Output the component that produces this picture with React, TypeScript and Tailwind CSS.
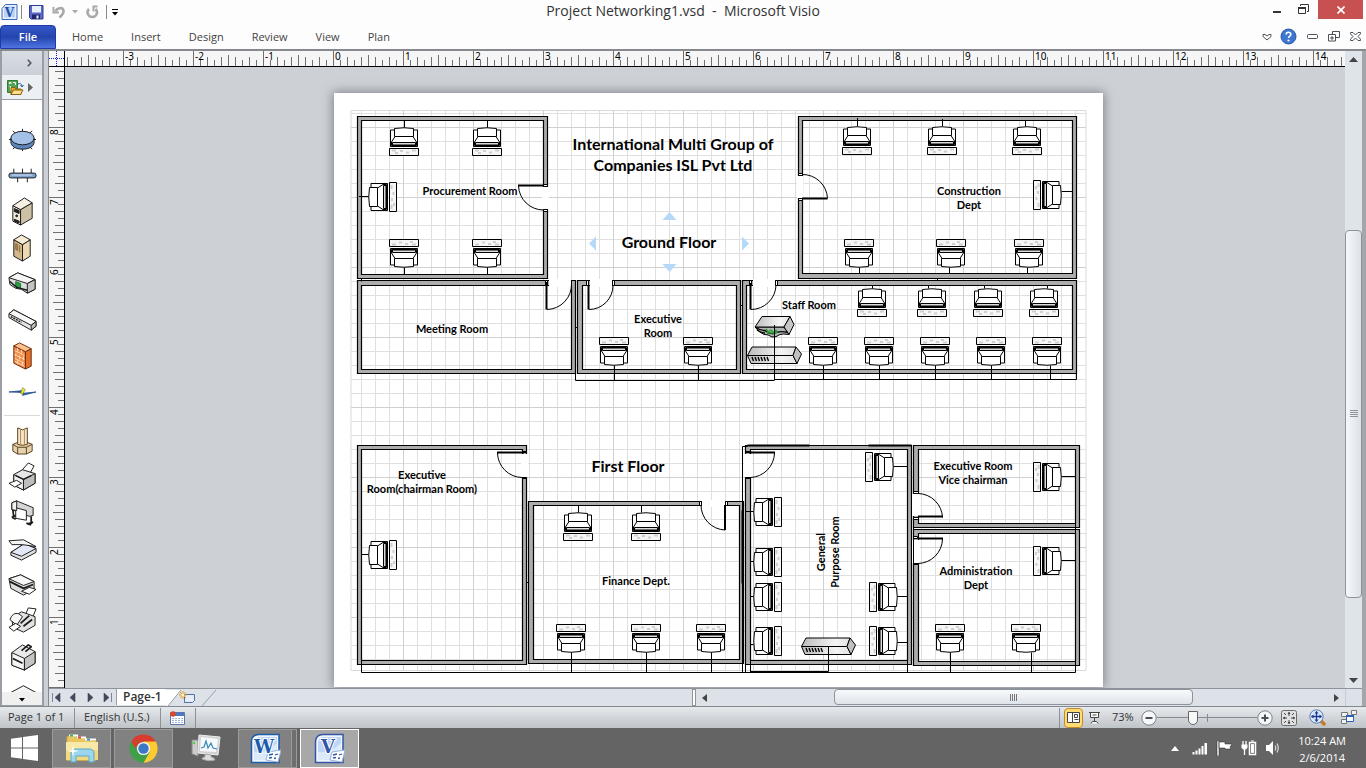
import React from "react";

const UI = "font-['Open_Sans','Noto_Sans',sans-serif]";

/* ---------- Title bar icons ---------- */

function VisioSmall() {
  return (
    <svg width="17" height="18" viewBox="0 0 17 18" aria-hidden="true">
      <path d="M1 5.5 4.5 1.5H16v15H1z" fill="#e6effc" stroke="#3c68b8" />
      <path d="M3 6 5.5 3.5H14v11H3z" fill="#bcd3f5" />
      <text x="8.5" y="13.5" fontSize="12" fontWeight="700" textAnchor="middle" fill="#1f4fa8" fontFamily="DejaVu Serif, serif">V</text>
    </svg>
  );
}

function SaveIcon() {
  return (
    <svg width="15" height="15" viewBox="0 0 15 15" aria-hidden="true">
      <path d="M.5.5h13.500v13.500H2L.5 12.500z" fill="#5a66c8" stroke="#343c96" />
      <rect x="3" y="1" width="9" height="6.500" fill="#e8f0fc" />
      <rect x="3" y="9.500" width="8" height="4.500" fill="#20246b" />
      <rect x="7.500" y="10.500" width="2" height="3" fill="#f3f6fd" />
    </svg>
  );
}

function UndoIcon() {
  return (
    <svg width="14" height="14" viewBox="0 0 14 14" fill="none" stroke="#a9a9a9" aria-hidden="true">
      <path d="M3.500 6.500C5 3 10.500 1.500 11.500 5.500c.6 3-2 5-4 7" strokeWidth="2.600" />
      <path d="M1.500 2v5.500H7" strokeWidth="2" />
    </svg>
  );
}

function RedoIcon() {
  return (
    <svg width="13" height="14" viewBox="0 0 13 14" fill="none" stroke="#a9a9a9" aria-hidden="true">
      <path d="M3 4C0 7 2 12 6.300 12S12.500 7 9.500 4" strokeWidth="2.600" />
      <path d="M11.500 1.500H7.500v5" strokeWidth="2" />
    </svg>
  );
}

function TitleBar() {
  return (
    <header className="relative flex h-6 shrink-0 items-center bg-[#fdfdfd]">
      <div className="flex items-center pl-px">
        <VisioSmall />
        <span className="ml-[3px] h-3.5 w-px bg-[#8a8a8a]" />
        <button aria-label="Save" className="ml-[7px]"><SaveIcon /></button>
        <button aria-label="Undo" className="ml-2"><UndoIcon /></button>
        <svg width="6" height="4" className="ml-1.5" aria-hidden="true"><path d="M0 0h6L3 3.500z" fill="#a9a9a9" /></svg>
        <button aria-label="Redo" className="ml-2"><RedoIcon /></button>
        <span className="ml-[7px] h-3.5 w-px bg-[#8a8a8a]" />
        <button aria-label="Customize toolbar" className="ml-1">
          <svg width="8" height="8" aria-hidden="true"><path d="M1 1.500h6" stroke="#000" /><path d="M1 4h6L4 7.500z" /></svg>
        </button>
      </div>
      <h1 className="pointer-events-none absolute inset-x-0 whitespace-pre pb-0.5 text-center text-sm text-[#333]">Project Networking1.vsd  -  Microsoft Visio</h1>
      <div className="ml-auto flex h-full items-start">
        <button aria-label="Minimize" className="mt-2 w-6">
          <svg width="8" height="6" className="mx-auto" aria-hidden="true"><path d="M0 4h8" stroke="#333" strokeWidth="2" /></svg>
        </button>
        <button aria-label="Restore" className="mt-1 flex w-7 justify-center">
          <svg width="11" height="11" viewBox="0 0 11 11" fill="none" stroke="#333" aria-hidden="true">
            <path d="M2.500 2V.500h8v7H9" /><path d="M.500 3.500h7v6h-7z" /><path d="M0 4h8" strokeWidth="2" />
          </svg>
        </button>
        <button aria-label="Close" className="ml-px mr-[3px] flex h-[19px] w-[45px] items-center justify-center bg-[#c75050]">
          <svg width="8" height="8" viewBox="0 0 8 8" aria-hidden="true"><path d="m.5.5 7 7m0-7-7 7" stroke="#fff" strokeWidth="1.700" /></svg>
        </button>
      </div>
    </header>
  );
}

const ribbonTabs = ["Home", "Insert", "Design", "Review", "View", "Plan"];

function Ribbon() {
  return (
    <nav className="flex h-[27px] shrink-0 items-stretch border-b-2 border-[#85898e] bg-[#fdfdfd] text-[11px] text-[#444]">
      <button className="mt-px h-6 w-14 rounded-t-sm border border-[#1d3ba5] bg-gradient-to-b from-[#3558c8] via-[#2544ac] to-[#4f74e2] font-semibold text-white">File</button>
      <div className="ml-0.5 flex pt-0.5">
        {ribbonTabs.map((t) => (
          <button key={t} className="px-3.5">{t}</button>
        ))}
      </div>
      <div className="ml-auto flex items-center gap-3 pr-[5px]">
        <button aria-label="Expand ribbon">
          <svg width="10" height="8" viewBox="0 0 10 8" fill="#fff" stroke="#4b5056" aria-hidden="true"><path d="M1 1.500h2L5 3l2-1.500h2V3.500L5 7 1 3.500z" /></svg>
        </button>
        <button aria-label="Help" className="-ml-1">
          <svg width="17" height="17" viewBox="0 0 17 17" aria-hidden="true">
            <circle cx="8.500" cy="8.500" r="7.500" fill="#3f77d0" stroke="#2a56a8" />
            <path d="M6.200 6.500c0-3 4.800-3 4.600 0-.1 1.600-2.200 1.700-2.200 3.500" fill="none" stroke="#fff" strokeWidth="1.700" />
            <circle cx="8.500" cy="12.500" r="1.100" fill="#fff" />
          </svg>
        </button>
        <button aria-label="Minimize window" className="-ml-0.5">
          <svg width="11" height="6" aria-hidden="true"><rect x=".5" y=".5" width="10" height="4" rx="1" fill="#fff" stroke="#4b5056" /></svg>
        </button>
        <button aria-label="Restore window" className="-ml-0.5">
          <svg width="12" height="11" viewBox="0 0 12 11" fill="#fff" stroke="#4b5056" aria-hidden="true"><path d="M4.500.500h7v6h-7z" /><path d="M.500 3.500h7v6.500h-7z" /><path d="M3 6h2v2H3z" /></svg>
        </button>
        <button aria-label="Close window" className="-ml-0.5">
          <svg width="11" height="9" viewBox="0 0 11 9" fill="#fff" stroke="#4b5056" aria-hidden="true"><path d="M.500.500H3L5.500 3 8 .500h2.500v1.300L8 4.500l2.500 2.700v1.300H8L5.500 6 3 8.500H.500V7.200L3 4.500.500 1.800z" /></svg>
        </button>
      </div>
    </nav>
  );
}

/* ---------- Stencil panel ---------- */

const k = { stroke: "#1c1c1c", strokeLinejoin: "round" as const };

const upperShapes: [string, React.ReactNode][] = [
  ["Ring network", <g {...k}><path d="M1 15h28M15 4v23M5 6l20 19M25 6 5 25" /><path d="M3 13.500v4C3 22 8 25 15 25s12-3 12-7.500v-4z" fill="#5d86be" /><ellipse cx="15" cy="13.500" rx="12" ry="7" fill="#a3c1e8" /></g>],
  ["Ethernet", <g {...k}><path d="M6 8v5M15 8v5M24 8v5M10 16v6M20 16v6" /><rect x="1" y="12.500" width="28" height="5" rx="2" fill="#7fa2cf" /><path d="M4 14.500h21" stroke="#d5e3f6" /></g>],
  ["Server", <g {...k}><path d="m5 9 8 4v16l-8-4z" fill="#f2ebd8" /><path d="m13 13 12-7v16l-12 7z" fill="#cdc2a6" /><path d="M5 9 17 1l8 5-12 7z" fill="#f6f0e2" /><path d="m6.500 12 5 2v3l-5-2zM6.500 23l5 2v2l-5-2z" fill="#222" /><circle cx="9" cy="19.500" r="1" fill="#222" /></g>],
  ["Mainframe", <g {...k}><path d="m6 7 9 5v17l-9-5z" fill="#d3b88c" /><path d="m15 12 8-5v17l-8 5z" fill="#eddab2" /><path d="m6 7 8-5 9 5-8 5z" fill="#f6ecd4" /><path d="m8 11 2 1v6l-2-1zM12 13v7" stroke="#8a6a3a" fill="#a98552" /></g>],
  ["Router", <g {...k}><path d="m1 9 9-5 18 7v10l-8 4-6-4-6-1-6-4z" fill="#dcdcdc" /><path d="m1 9 9-5 18 7-8 4z" fill="#f6f6f6" /><path d="m20 15 8-4v10l-8 4z" fill="#c4c4c4" /><path d="m8 13 5 2v5l-5-2z" fill="#27a043" stroke="#17752d" /><path d="m2 13 7 6 11 3" fill="none" strokeWidth="1.500" /></g>],
  ["Switch", <g {...k}><path d="m1 9 5-4 23 12v5l-5 4L1 13z" fill="#e4e4e4" /><path d="m1 9 5-4 23 12-5 4z" fill="#f7f7f7" /><path d="m24 21 5-4v5l-5 4z" fill="#bbb" /><path d="m3 12 11 6" strokeDasharray="2 1" strokeWidth="1.500" /></g>],
  ["Firewall", <g stroke="#6b2d0c"><path d="m18 11 6-3v18l-6 3z" fill="#e0702c" /><path d="m6 5 12 6v18L6 23z" fill="#f58a45" /><path d="m6 5 6-3 12 6-6 3z" fill="#ffc08c" /><path d="m7 10 10 5M7 14l10 5M7 18l10 5M7 21l10 5M10 7v4m4-2v4m-6 0v3m4-1v4m4-3v4m-6 0v4m5-2v3" stroke="#ffdcc0" /></g>],
  ["Comm link", <g><path d="M1 15.500 16 14l-2 3 15-1.500L15 19l1-3z" fill="#2c5fa8" stroke="#1d4686" strokeWidth=".8" /><path d="m15 11 3 2-3 5-2-1z" fill="#e8e337" stroke="#5d6a1d" strokeWidth=".5" /></g>],
];

const lowerShapes: [string, React.ReactNode][] = [
  ["Connector", <g stroke="#5a3f1c" strokeLinejoin="round"><path d="M5 19v7l5 3h9l6-3v-7l-5-2H10z" fill="#e6d2ae" /><path d="m5 19 5 3h9l6-3M10 22v7M19 22v7" fill="none" /><path d="m10 2 5 2 5-2v17l-5 1-5-1z" fill="#f6e5c8" /><path d="M13 4v16M17 4v16" stroke="#a98a5c" /></g>],
  ["Printer", <g {...k}><path d="m14 9 7-8 6 3-5 9z" fill="#fff" /><path d="m6 13 9-5 13 4v10l-12 7-10-5z" fill="#e6e6e6" /><path d="m6 13 10 5v11l-10-5z" fill="#f1f1f1" /><path d="m16 18 12-6v10l-12 7z" fill="#bdbdbd" /><path d="m1 22 8-3 5 3-7 4z" fill="#fff" /><path d="m8 14 8 4 8-4" strokeWidth="1.500" fill="none" /></g>],
  ["Plotter", <g {...k}><path d="m4 5 5-2 17 7v8l-4 1-18-7z" fill="#d6d6d6" /><path d="m8 10 11 3v10L8 21z" fill="#fff" /><path d="m5 12 1 8m-2 0 4-2m16 1v8m-4 0 6-2M4 20l4 2m11 4 5 2" strokeWidth="1.800" /><path d="m4 5 5-2v10l-5-1z" fill="#f2f2f2" /></g>],
  ["Scanner", <g {...k}><path d="m3 19 14-9 12 5v4l-15 8-11-5z" fill="#e0e0e0" /><path d="m3 19 14-9 12 5-15 8z" fill="#e3e9f6" /><path d="m1 7 15-1 13 7-14-2-11 0z" fill="#f4f4f4" /></g>],
  ["Inkjet printer", <g {...k}><path d="m1 9 12-4 14 7v8l-11 6-13-7z" fill="#dedede" /><path d="m1 9 12-4 14 7-11 4z" fill="#f7f7f7" /><path d="m2 12 14 7 10-4" fill="none" strokeWidth="1.800" /><path d="m14 22 8-4 7 2-7 5z" fill="#fff" /></g>],
  ["Fax", <g {...k}><path d="m18 9 3-7 8 1-4 10z" fill="#fff" /><path d="m4 12 10-6 14 5v9l-12 7-11-5z" fill="#e2e2e2" /><path d="M2 14q3-8 9-6l4 3-6 9z" fill="#f7f7f7" /><path d="m13 18 9-8m-6 11 9-7" strokeWidth="1.800" /><path d="m1 22 7-4 5 3-7 5z" fill="#fff" /></g>],
  ["Copier", <g {...k}><path d="m4 11 11-8 13 7v12l-11 7-13-5z" fill="#e9e9e9" /><path d="m4 11 13 6v12L4 24z" fill="#f6f6f6" /><path d="m17 17 11-7v12l-11 7z" fill="#c4c4c4" /><path d="m5 17 10 5m-1-13 7-6 3 2-6 5" strokeWidth="1.800" fill="none" /></g>],
  ["Multi-function device", <g {...k}><path d="m2 19 13-9 14 6v4l-14 8L3 22z" fill="#dcdcdc" /><path d="m1 16 15-8 13 7-14 1z" fill="#f4f4f4" /></g>],
];

function ShapeButton({ name, art }: { name: string; art: React.ReactNode }) {
  return (
    <button aria-label={name} className="flex h-9 w-full shrink-0 items-center justify-center">
      <svg width="29" height="29" viewBox="0 0 30 30" aria-hidden="true">{art}</svg>
    </button>
  );
}

function StencilPanel() {
  return (
    <aside className="flex w-11 shrink-0 flex-col border-x-2 border-[#999ea5] bg-white">
      <button aria-label="Expand shapes window" className="flex h-6 shrink-0 items-center justify-end bg-gradient-to-b from-[#d9dde4] to-[#cbd0d8] pr-2.5">
        <svg width="5" height="8" viewBox="0 0 5 8" aria-hidden="true"><path d="m.8.8 3 3.200-3 3.200" fill="none" stroke="#555" strokeWidth="1.600" /></svg>
      </button>
      <button aria-label="Open stencil" className="flex h-[25px] shrink-0 items-center gap-1 border-b border-[#999ea5] bg-[#eceff3] pl-[5px]">
        <svg width="17" height="17" viewBox="0 0 17 17" aria-hidden="true">
          <path d="M.500 1.500h10v12H.500z" fill="#4fa352" stroke="#2f7c33" />
          <path d="M2.500 5V3.500H4V5m2-1.500h2.500V6M2.500 7.500h1v4" fill="none" stroke="#fff" />
          <path d="M11 5c2-1 4 0 4 2m-1.500-1L15 8l1.500-2" fill="none" stroke="#2d5f9c" />
          <path d="M4 15.500V8.500h4l1 1.500h5v5.500z" fill="#e9a820" stroke="#8c5f10" />
          <path d="M4 15.500 6.500 11H16l-2.500 4.500z" fill="#ffe08a" stroke="#8c5f10" />
        </svg>
        <svg width="6" height="9" aria-hidden="true"><path d="M0 0v9l5-4.500z" fill="#666" /></svg>
      </button>
      <div className="flex min-h-0 flex-1 flex-col overflow-hidden pt-[21px]">
        {upperShapes.map(([n, a]) => <ShapeButton key={n} name={n} art={a} />)}
        <hr className="mx-0.5 my-1.5 shrink-0 border-[#d9d9d9]" />
        {lowerShapes.map(([n, a]) => <ShapeButton key={n} name={n} art={a} />)}
      </div>
      <button aria-label="More shapes" className="flex h-3.5 shrink-0 justify-center border-b border-[#999ea5] bg-[#f0f0f0] pt-1.5">
        <svg width="6" height="4" aria-hidden="true"><path d="M0 0h6L3 3.500z" fill="#000" /></svg>
      </button>
    </aside>
  );
}

/* ---------- Rulers ---------- */

const UNIT = 70;
const STEP = UNIT / 10;
const rulerFont = "'Noto Sans', sans-serif";

function TopRuler() {
  const zero = 268;
  const ticks = [];
  for (let i = -38; i < 150; i++) ticks.push(i);
  return (
    <svg className="h-4 w-full min-w-0 flex-1 overflow-visible border-b border-black bg-[#f6f6f6]" aria-hidden="true">
      {ticks.map((i) => {
        const m = ((i % 10) + 10) % 10;
        const top = m === 0 ? 0 : m === 5 ? 4 : m % 2 ? 9 : 6;
        const x = zero + i * STEP + 0.5;
        return <line key={i} x1={x} x2={x} y1={top} y2="15" stroke="#707070" />;
      })}
      {ticks.filter((i) => i % 10 === 0).map((i) => (
        <text key={i} x={zero + i * STEP + 2} y="9" fontSize="10" fill="#000" fontFamily={rulerFont}>{i / 10}</text>
      ))}
    </svg>
  );
}

function SideRuler() {
  const zero = 620;
  const ticks = [];
  for (let i = 0; i <= 88; i++) ticks.push(i);
  return (
    <svg className="h-full w-4 shrink-0 overflow-visible border-r border-black bg-[#f6f6f6]" aria-hidden="true">
      {ticks.map((i) => {
        const m = i % 10;
        const left = m === 0 ? 0 : m === 5 ? 4 : m % 2 ? 9 : 6;
        const y = zero - i * STEP + 0.5;
        return <line key={i} y1={y} y2={y} x1={left} x2="15" stroke="#707070" />;
      })}
      {ticks.filter((i) => i % 10 === 0 && i > 0).map((i) => {
        const y = zero - i * STEP + 8;
        return <text key={i} x="9" y={y} transform={`rotate(-90 9 ${y})`} fontSize="10" fill="#000" fontFamily={rulerFont}>{i / 10}</text>;
      })}
    </svg>
  );
}

/* ---------- Floor plan ---------- */

type Box = [number, number, number, number];

const rooms: { outer: Box; inner: Box }[] = [
  { outer: [357, 116, 547, 278], inner: [361, 120, 543, 274] },
  { outer: [357, 280, 575, 373], inner: [361, 285, 571, 369] },
  { outer: [577, 280, 740, 373], inner: [582, 285, 736, 369] },
  { outer: [742, 280, 1076, 373], inner: [746, 285, 1072, 369] },
  { outer: [798, 116, 1076, 278], inner: [802, 120, 1072, 273] },
  { outer: [357, 445, 526, 664], inner: [361, 449, 522, 660] },
  { outer: [528, 501, 743, 663], inner: [533, 505, 739, 659] },
  { outer: [745, 445, 911, 664], inner: [750, 449, 907, 660] },
  { outer: [913, 445, 1079, 527], inner: [918, 449, 1075, 523] },
  { outer: [913, 529, 1079, 665], inner: [918, 533, 1075, 661] },
];

/* Opening in the wall, the door leaf and its swing. */
const doors: { gap: Box; caps: string; leaf: string; arc: string }[] = [
  { gap: [542, 187, 549, 209], caps: "M543 184h4v2h-4zM543 209h4v2h-4z", leaf: "M518 185.500h26", arc: "M518.500 186a25 25 0 0 0 25 24" },
  { gap: [549, 279, 571, 287], caps: "M545 280h2v5h-2zM571 280v5", leaf: "M546.500 282v27.500", arc: "M547 309.500a25 25 0 0 0 24.500-26" },
  { gap: [590, 279, 612, 287], caps: "M586 280h2v5h-2zM612 280h2v5h-2z", leaf: "M588.500 285v24.500", arc: "M589 309.500a24 24 0 0 0 24-24" },
  { gap: [753, 279, 775, 287], caps: "M749 280h2v5h-2zM775 280h2v5h-2z", leaf: "M750.500 283v26.500", arc: "M751 309.500a25 25 0 0 0 25-24" },
  { gap: [797, 176, 803.5, 198], caps: "M798 173h4v2h-4zM798 198h4v2h-4z", leaf: "M802 198.500h25.500", arc: "M802 174.500a25 25 0 0 1 25.500 24" },
  { gap: [521, 454, 528, 477], caps: "M522 451h4v1h-4zM522 477h4v1h-4z", leaf: "M497 452.500h27", arc: "M497.500 453a25 25 0 0 0 25 24.500" },
  { gap: [702, 500, 725, 507], caps: "M699 501h2v4h-2zM725 501h2v4h-2z", leaf: "M725 505v25", arc: "M701 505a25 25 0 0 0 24 25" },
  { gap: [744, 454, 752, 477], caps: "M745 451h4v1h-4zM745 477h5v1h-5z", leaf: "M749 452.500h26", arc: "M774.500 453a25 25 0 0 1-24 24.500" },
  { gap: [912, 494, 920, 516], caps: "M913 491h5v2h-5zM913 517h5v2h-5z", leaf: "M918 516.500h25", arc: "M918 493.500a25 25 0 0 1 24.500 24" },
  { gap: [912, 540, 920, 563], caps: "M913 536h4v2h-4zM913 563h5v1h-5z", leaf: "M918 538.500h25", arc: "M942.500 539a25 25 0 0 1-24.500 24.500" },
];

/* x, y, rotation, cable end measured from the desk edge, sideways shift of the cable */
const workstations: [number, number, number, number, number?][] = [
  [404, 156, 180, 36, 0], [487, 156, 180, 36, 0], [397, 197, 90, 38],
  [404, 239, 0, 35], [487, 239, 0, 35],
  [857, 155, 180, 37], [942, 155, 180, 36], [1027, 155, 180, 35, 2], [1033, 195, -90, 39, 3],
  [859, 239, 0, 35], [951, 239, 0, 35, -2], [1029, 239, 0, 35, -2],
  [872, 317, 180, 32], [932, 317, 180, 32, 4], [988, 317, 180, 32, 4], [1044, 317, 180, 32, -3],
  [614, 337, 0, 43], [698, 337, 0, 43],
  [823, 337, 0, 42], [879, 337, 0, 42], [935, 337, 0, 42], [991, 337, 0, 42], [1047, 337, 0, 42, 3],
  [397, 555, 90, 35],
  [578, 541, 180, 35], [646, 541, 180, 35, 5],
  [571, 624, 0, 48], [646, 624, 0, 48], [711, 624, 0, 48],
  [782, 512, 90, 36], [782, 562, 90, 32], [782, 597, 90, 32], [782, 641, 90, 32, 4],
  [865, 467, -90, 42], [869, 597, -90, 38], [869, 641, -90, 38, -2],
  [1033, 477, -90, 42], [1033, 561, -90, 42],
  [950, 624, 0, 48], [1026, 624, 0, 48, 5],
];

function Workstation({ x, y, r, end, shift = 0 }: { x: number; y: number; r: number; end: number; shift?: number }) {
  const flip = r === 180 || r === 90 ? -0.5 : 0.5;
  return (
    <g transform={`translate(${x} ${y}) rotate(${r})`} fill="#fff" stroke="#000">
      <path d="M-14.500.500h29v7h-29z" fill="#f6f6f6" />
      <path d="M-12 5.500h4m3-2h3m3 1.500h3m2-2h3m-1 2.500h4" fill="none" stroke="#cfcfcf" strokeWidth="2" />
      <path d="M-13.500 9.500h27v16.500h-27z" />
      <path d="M-12.500 10.500h25v3.500l-3.500 5.500H-9l-3.500-5.500z" />
      <path d="M-11.500 11h23v2.500h-23z" fill="#dcdcdc" />
      <path d="M-9.500 19.500h19v8q-9.500 1.500-19 0z" />
      <path d={`M${shift + flip} 28.500V${end}`} fill="none" />
    </g>
  );
}

function SwitchDevice({ x, y }: { x: number; y: number }) {
  return (
    <g transform={`translate(${x} ${y})`} stroke="#000" strokeLinejoin="round">
      <path d="M.5 9.500h45.500l4 8H4z" fill="url(#metal)" />
      <path d="M5 1h44l-3 8.500H.5z" fill="url(#metal)" />
      <path d="m49 1 5.500 7L50 17.500l-4-8z" fill="#c0c0c0" />
      <path d="m5 11 1.500 4m1.500-4 1.500 4m1.500-4 1.500 4m1.500-4 1.500 4m1.500-4 1.500 4m1.500-4 1.500 4" strokeWidth="1.400" />
    </g>
  );
}

function RouterDevice() {
  return (
    <g stroke="#000" strokeLinejoin="round">
      <path d="M755 327h29l5 7.500q-6-1-9 0-4 3-8 2.500-4-3-8-2.500-6-3-9-7.500z" fill="#b4b4b4" />
      <path d="m755 327 7-10.500h28l-6 10.500z" fill="url(#metal)" />
      <path d="m790 316.500 4 8-5 10-5-7.500z" fill="#c6c6c6" />
      <path d="M756 327.500q4 3 9 3 4 4 9 3 5-3 14-1M757 330q4 3 8 3" fill="none" strokeWidth="1.300" />
      <path d="m766 329 2 3 3-2 3 3 2-3 1 3m-10 0h9" fill="none" stroke="#27a035" strokeWidth="1.500" />
    </g>
  );
}

const small: [string, number, number][] = [
  ["Procurement Room", 470, 195],
  ["Construction", 969, 195], ["Dept", 969, 209],
  ["Meeting Room", 452, 333],
  ["Executive", 658, 323], ["Room", 658, 337],
  ["Staff Room", 809, 309],
  ["Executive", 422, 479], ["Room(chairman Room)", 422, 493],
  ["Finance Dept.", 636, 585],
  ["Executive Room", 973, 470], ["Vice chairman", 973, 484],
  ["Administration", 976, 575], ["Dept", 976, 589],
];

const large: [string, number, number][] = [
  ["International Multi Group of", 673, 150],
  ["Companies ISL Pvt Ltd", 673, 171],
  ["Ground Floor", 669, 248],
  ["First Floor", 628, 472],
];

function gridPath(start: number, stop: number, step: number, draw: (v: number) => string) {
  let d = "";
  for (let v = start; v < stop; v += step) d += draw(v);
  return d;
}

function ring([a, b, c, d]: Box) {
  return `M${a} ${b}H${c}V${d}H${a}z`;
}

function FloorPlan() {
  const v = (x: number) => `M${x} 110V671`;
  const h = (y: number) => `M351 ${y}H1086`;
  return (
    <svg width="769" height="594" viewBox="334 93 769 594" role="img" aria-label="Floor plan" className="block bg-white shadow-[0_0_10px_1px_#7d828a]">
      <defs>
        <linearGradient id="metal" x1="0" x2="1"><stop offset="0" stopColor="#bdbdbd" /><stop offset=".7" stopColor="#f4f4f4" /><stop offset="1" stopColor="#e2e2e2" /></linearGradient>
      </defs>
      <g fill="none">
        <path d={gridPath(361.5, 1086, 14, v) + gridPath(113.5, 671, 14, h)} stroke="#dfdfdf" />
        <path d={gridPath(403.5, 1086, 70, v) + gridPath(127.5, 671, 70, h)} stroke="#d0d0d0" />
        <path d="M351 110.500h735V670.500H351z" stroke="#dadada" />
      </g>

      <g transform="translate(.5 .5)">
        {rooms.map((r, i) => (
          <path key={i} d={ring(r.outer) + ring(r.inner)} fillRule="evenodd" fill="#adadad" stroke="#000" strokeWidth="1.200" />
        ))}
      </g>
      {doors.map((d, i) => (
        <g key={i} fill="none" stroke="#000">
          <rect x={d.gap[0]} y={d.gap[1]} width={d.gap[2] - d.gap[0]} height={d.gap[3] - d.gap[1]} fill="#fff" stroke="none" />
          <path d={d.caps} fill="#fff" transform="translate(.5 .5)" />
          <path d={d.leaf} strokeWidth="2" />
          <path d={d.arc} />
        </g>
      ))}

      <g fill="none" stroke="#000" transform="translate(.5 .5)">
        <path d="M575 373v7h199M774 379h302v-6M361 278v3M937 278v2M575 327h2M740 305h2" />
        <path d="M361 660v12h714v-150M742 672V446h5M745 664v8M750 660v12M750 671h78v-24M907 660v12M526 582h2M913 527v70" />
        <path d="M742 510v73M747 445h62M868 445h43" strokeWidth="2" />
      </g>

      {workstations.map(([x, y, r, end, shift], i) => (
        <Workstation key={i} x={x} y={y} r={r} end={end} shift={shift} />
      ))}
      <RouterDevice />
      <SwitchDevice x={747} y={346} />
      <SwitchDevice x={801} y={637} />
      <path d="M774.500 325v55M828.500 646v25" stroke="#000" />

      <g fill="#b5d8fb">
        <path d="m669.500 212 7 8h-14zM669.500 272l7-8h-14zM589 243.500l7-7v14zM749 243.500l-7-7v14z" />
      </g>
      <g fontFamily="Lato, sans-serif" fontWeight="700" textAnchor="middle" fill="#000">
        <g fontSize="11">
          {small.map(([t, x, y], i) => <text key={i} x={x} y={y}>{t}</text>)}
          <text x="825" y="552" transform="rotate(-90 825 552)">General</text>
          <text x="839" y="552" transform="rotate(-90 839 552)">Purpose Room</text>
        </g>
        <g fontSize="16">
          {large.map(([t, x, y]) => <text key={t} x={x} y={y}>{t}</text>)}
        </g>
      </g>
    </svg>
  );
}

/* ---------- Scroll bars and page tabs ---------- */

function VerticalScroll() {
  return (
    <div className="flex w-[17px] shrink-0 flex-col items-stretch bg-[#dfe3ea]">
      <button aria-label="Scroll up" className="flex h-[17px] items-center justify-center"><svg width="9" height="5" aria-hidden="true"><path d="M0 5h9L4.500 0z" fill="#444" /></svg></button>
      <div className="flex-[163]" />
      <div className="flex flex-[368] items-center justify-center rounded-sm border border-[#8d939b] bg-gradient-to-r from-[#f6f8fa] to-[#dde2e9]">
        <svg width="8" height="9" aria-hidden="true"><path d="M0 .500h8M0 2.500h8M0 4.500h8M0 6.500h8" stroke="#8d939b" /></svg>
      </div>
      <div className="flex-[74]" />
      <button aria-label="Scroll down" className="flex h-4 items-center justify-center"><svg width="9" height="5" aria-hidden="true"><path d="M0 0h9L4.500 5z" fill="#444" /></svg></button>
    </div>
  );
}

const pageNav = [
  ["First page", "M.500 0v9M8 0v9L3 4.500z"],
  ["Previous page", "M6 0v9L1 4.500z"],
  ["Next page", "M2 0v9l5-4.500z"],
  ["Last page", "M8.500 0v9M1 0v9l5-4.500z"],
];

function PageBar() {
  return (
    <div className="flex h-[18px] shrink-0 border-t border-[#8f949b] bg-[#dde1e8]">
      <div className="flex items-center gap-2 pl-[3px]">
        {pageNav.map(([n, d]) => (
          <button key={n} aria-label={n}>
            <svg width="9" height="9" aria-hidden="true"><path d={d} fill="#3f4a5a" stroke="#3f4a5a" strokeWidth=".6" /></svg>
          </button>
        ))}
      </div>
      <button className="ml-1 h-4 border-l border-[#9aa0a8] bg-white pl-1.5 pr-1 text-xs font-semibold leading-4 text-[#333]">Page-1</button>
      <button aria-label="Insert page">
        <svg width="52" height="16" aria-hidden="true">
          <path d="M0 0h15L2 16H0z" fill="#fff" /><path d="M15 0 2 16M50 0 36 16" fill="none" stroke="#9aa0a8" />
          <path d="M18.500 4.500h10v6l-2 2h-8z" fill="#e6edf8" stroke="#4f6ea3" />
          <path d="M17 1v8M13 5h8M14 2l6 6M20 2l-6 6" stroke="#e59a26" /><circle cx="17" cy="5" r="1.500" fill="#fff3c8" />
        </svg>
      </button>
      <div className="flex flex-[479] justify-end"><span className="h-full w-1 border border-[#8f949b] bg-white" /></div>
      <div className="flex flex-[651] items-stretch">
        <button aria-label="Scroll left" className="px-1.5"><svg width="5" height="8" aria-hidden="true"><path d="M5 0v8L0 4z" fill="#444" /></svg></button>
        <div className="flex-[122]" />
        <div className="flex h-4 flex-[358] items-center justify-center rounded-sm border border-[#8d939b] bg-gradient-to-b from-[#f8fafb] to-[#dfe4eb]">
          <svg width="8" height="7" aria-hidden="true"><path d="M.500 0v7M2.500 0v7M4.500 0v7M6.500 0v7" stroke="#777" /></svg>
        </div>
        <div className="flex-[135]" />
        <button aria-label="Scroll right" className="px-1.5"><svg width="5" height="8" aria-hidden="true"><path d="M0 0v8l5-4z" fill="#444" /></svg></button>
      </div>
      <div className="w-[17px] shrink-0 border-l border-[#c8cdd4]" />
    </div>
  );
}

function Workspace() {
  return (
    <main className="flex min-h-0 flex-1 bg-[#ccd0d6]">
      <StencilPanel />
      <div className="ml-1 flex min-w-0 flex-1 flex-col border-l border-[#85898e]">
        <div className="flex min-h-0 flex-1">
          <div className="flex min-w-0 flex-1 flex-col">
            <div className="flex h-4 shrink-0">
              <svg className="h-4 w-4 shrink-0 border-b border-r border-black bg-[#f6f6f6]" aria-hidden="true">
                <path d="M7.500 0v15M0 7.500h15" stroke="#1414e0" strokeDasharray="1 1" />
              </svg>
              <TopRuler />
            </div>
            <div className="flex min-h-0 flex-1">
              <SideRuler />
              <div className="min-w-0 flex-1 overflow-hidden bg-[#cdd0d5] pl-[269px] pt-[26px]">
                <FloorPlan />
              </div>
            </div>
          </div>
          <VerticalScroll />
        </div>
        <PageBar />
      </div>
      <div className="w-1 shrink-0 bg-[#a3a6aa]" />
    </main>
  );
}

/* ---------- Status bar ---------- */

function ZoomButton({ label, d }: { label: string; d: string }) {
  return (
    <button aria-label={label}>
      <svg width="16" height="16" viewBox="0 0 16 16" className="block" aria-hidden="true">
        <circle cx="8" cy="8" r="7.200" fill="#f5f7f9" stroke="#7c8188" /><path d={d} stroke="#4b4f55" strokeWidth="2" />
      </svg>
    </button>
  );
}

function StatusBar() {
  const sep = <span className="h-5 w-px bg-[#8e9297]" />;
  return (
    <footer className="flex h-[22px] shrink-0 items-center border-t border-[#85898e] bg-gradient-to-b from-[#e6e9ec] to-[#bfc4c9] text-[11px] text-[#333]">
      <span className="w-[74px] whitespace-nowrap pl-2">Page 1 of 1</span>
      {sep}
      <span className="w-[85px] whitespace-nowrap pl-[9px]">English (U.S.)</span>
      {sep}
      <button aria-label="Record macro" className="ml-[9px] mr-2.5">
        <svg width="15" height="14" viewBox="0 0 15 14" aria-hidden="true">
          <path d="M.500 1.500h14v12H.500z" fill="#fff" stroke="#5a77ad" /><path d="M1 2h13v3H1z" fill="#4d78c4" />
          <path d="M2 7.500h11M2 9.500h11M2 11.500h11" stroke="#9db4dc" strokeDasharray="2 1" /><circle cx="3" cy="3" r="2.800" fill="#d9482b" />
        </svg>
      </button>
      {sep}
      <div className="ml-auto flex items-center">
        {sep}
        <button aria-label="Normal view" className="ml-1 flex h-5 w-[19px] items-center justify-center rounded-sm border border-[#c28a2a] bg-[#ffdc73]">
          <svg width="13" height="11" viewBox="0 0 13 11" fill="#fff" stroke="#444" aria-hidden="true"><path d="M.500.500h12v10H.500zM5.500.500v10M7.500 2.500h3v3h-3zM7.500 7.500h4" /></svg>
        </button>
        <button aria-label="Full screen" className="ml-1.5">
          <svg width="11" height="12" viewBox="0 0 11 12" fill="#fff" stroke="#444" aria-hidden="true"><path d="M0 .500h11M1.500.500v5h8v-5M5.500 5.500v4M2 11.500l1.500-2h4l1.500 2" /><path d="M3.500 3h4" /></svg>
        </button>
        <span className="ml-3 w-[29px]">73%</span>
        <ZoomButton label="Zoom out" d="M4.500 8h7" />
        <div className="relative flex w-[100px] items-center">
          <span className="absolute inset-x-0 h-px bg-[#858a91]" />
          <span className="absolute left-1/2 h-2 w-px bg-[#858a91]" />
          <input type="range" aria-label="Zoom" min={0} max={100} defaultValue={35} className="relative h-4 w-full appearance-none bg-transparent [&::-webkit-slider-thumb]:h-3.5 [&::-webkit-slider-thumb]:w-2.5 [&::-webkit-slider-thumb]:appearance-none [&::-webkit-slider-thumb]:rounded-b-full [&::-webkit-slider-thumb]:border [&::-webkit-slider-thumb]:border-[#666] [&::-webkit-slider-thumb]:bg-[#f5f7f9]" />
        </div>
        <ZoomButton label="Zoom in" d="M4.500 8h7M8 4.500v7" />
        <button aria-label="Fit page to window" className="ml-2">
          <svg width="16" height="16" viewBox="0 0 16 16" aria-hidden="true"><rect x=".5" y=".5" width="15" height="15" rx="2" fill="#dfe1e2" stroke="#6d6d6d" /><path d="M8 2v4M8 10v4M2 8h4M10 8h4M3 3l2 2m8-2-2 2M3 13l2-2m8 2-2-2" stroke="#444" /><path d="m6.500 4 1.500-2 1.500 2m-3 8 1.500 2 1.500-2M4 6.500 2 8l2 1.500m8-3 2 1.500-2 1.500" fill="#444" /></svg>
        </button>
        <button aria-label="Pan and zoom" className="ml-3">
          <svg width="17" height="17" viewBox="0 0 17 17" aria-hidden="true"><path d="m12 12 3 3" stroke="#c97a28" strokeWidth="3.500" strokeLinecap="round" /><circle cx="7.500" cy="7.500" r="6.700" fill="#dbe9fa" stroke="#5b7fb5" /><path d="M7.500 2.500v10M2.500 7.500h10" stroke="#1d3c91" strokeWidth="1.300" /><path d="m5.500 4.500 2-2.500 2 2.500zm0 6 2 2.500 2-2.500zm-1-5L2 7.500l2.500 2zm6 0 2.500 2-2.500 2z" fill="#1d3c91" /></svg>
        </button>
        <button aria-label="Switch windows" className="ml-[15px] mr-[9px]">
          <svg width="16" height="15" viewBox="0 0 16 15" fill="#f2f2f2" stroke="#777" aria-hidden="true"><path d="M.500 2.500h6v4h-6zM10.500.500h5v4h-5zM.500 9.500h5v4h-5z" /><path d="M5.500 5.500h7v6h-7z" fill="#fff" stroke="#2b5fb8" /><path d="M5 6h8" stroke="#2b5fb8" strokeWidth="2" /></svg>
        </button>
      </div>
    </footer>
  );
}

/* ---------- Taskbar ---------- */

function OfficeTile({ letter, color }: { letter: string; color: string }) {
  return (
    <svg width="31" height="31" viewBox="0 0 31 31" aria-hidden="true">
      <path d="M1.500 8.500Q2 1.500 9 1.500h20v28H1.500z" fill="#f2f7fe" stroke={color} strokeWidth="1.500" />
      <path d="M4 10Q4 4 10 4h17v23H4z" fill="#bdd5f6" />
      <path d="M4 19q12 2 23-9v17H4z" fill="#dceafc" />
      <path d="m18 19 13-2-3 12-12-2z" fill="#fff" stroke="#9ab2dc" /><path d="m19 22 4-1m2 1 3-1m-9 4 3-.500m2 1 2-.500" stroke={color} strokeWidth="1.300" />
      <text x="14" y="20" textAnchor="middle" fontSize="18" fontWeight="700" fill={color} stroke="#fff" strokeWidth="2" paintOrder="stroke" fontFamily="DejaVu Serif, serif">{letter}</text>
    </svg>
  );
}

const taskBox = "flex w-[59px] items-center justify-center border border-[#9b9b9b] bg-[#818181]";

function Taskbar() {
  return (
    <div className="flex h-10 shrink-0 items-center bg-[#646464] text-white">
      <button aria-label="Start" className="flex w-[52px] pl-[11px]">
        <svg width="27" height="26" viewBox="0 0 27 26" fill="#fff" aria-hidden="true"><path d="M0 3.700 11 2.200v10.300H0zM12 2l15-2v12.500H12zM0 13.500h11v10.300L0 22.300zM12 13.500h15V26l-15-2z" /></svg>
      </button>
      <button aria-label="File Explorer" className={`${taskBox} h-[39px]`}>
        <svg width="34" height="30" viewBox="0 0 34 30" aria-hidden="true">
          <path d="M2 3.500h9l2 2h9l2 2h7v20H2z" fill="#e9c75c" stroke="#c9a850" />
          <path d="M4 2.500h9M12 4.500h9M20 6.500h11" stroke="#fff" strokeWidth="2" />
          <path d="M5 2.500h3" stroke="#3fae49" strokeWidth="2" /><path d="M13 4.500h3" stroke="#d9472f" strokeWidth="2" /><path d="M22 6.500h3" stroke="#3f8fd0" strokeWidth="2" />
          <path d="M1 9h32v18H1z" fill="#f9e9a8" /><path d="M1 17h32v10H1z" fill="#f3d97e" />
          <path d="M6 29v-9q0-4 5-4h13q5 0 5 4v9h-5v-6H11v6z" fill="#9bd5ee" stroke="#5ba8ca" />
          <path d="m8 12 1 5 5 1-5 1-1 5-1-5-5-1 5-1z" fill="#fff" />
        </svg>
      </button>
      <button aria-label="Google Chrome" className={`${taskBox} ml-[3px] h-[39px]`}>
        <svg width="29" height="29" viewBox="-14.500 -14.500 29 29" aria-hidden="true">
          <path d="M0 0-12.300-7A14.200 14.200 0 0 1 12.300-7z" fill="#db3b2c" /><path d="M0-7H12.300A14.200 14.200 0 0 1 0 14.200L6 3.500z" fill="#fccb30" />
          <path d="M-12.300-7A14.200 14.200 0 0 0 0 14.200L6 3.500-6 3.500z" fill="#3fa048" /><path d="M-12.300-7-6 3.500 0 0v-7z" fill="#3fa048" /><path d="M-12.300-7H12.300L6-7H0L-6-3.500-8 0z" fill="#db3b2c" />
          <circle r="6.600" fill="#f5f5f5" /><circle r="5.200" fill="#3b78c6" />
        </svg>
      </button>
      <button aria-label="System monitor" className="ml-[17px] flex w-8 justify-center">
        <svg width="31" height="28" viewBox="0 0 31 28" aria-hidden="true">
          <path d="M1 6h6v16l-6-2z" fill="#ccc" stroke="#888" /><circle cx="3" cy="9" r="1.300" fill="#53d04a" />
          <path d="m8 1 21 2-2 18-20-2z" fill="#d2d2d2" stroke="#efefef" /><path d="m10 3 17 2-2 13-16-1z" fill="#f7fafc" />
          <path d="m10 14 3-1 2-6 2 7 3-5 2 5 4 1" fill="none" stroke="#3788b8" strokeWidth="1.200" /><path d="m14 20 6 1v2q4 1 4 3-7 2-13-1 0-2 3-2z" fill="#ddd" stroke="#aaa" />
        </svg>
      </button>
      <button aria-label="Microsoft Word" className="ml-4 flex h-[39px] w-[54px] items-center justify-center border border-[#9b9b9b] bg-[#818181]"><OfficeTile letter="W" color="#1b5cab" /></button>
      <span className="h-[39px] w-[5px] border border-l-0 border-[#9b9b9b] bg-[#6f6f6f]" />
      <button aria-label="Microsoft Visio" className="ml-[3px] flex h-[39px] w-[59px] items-center justify-center border border-white bg-[#a8a8a8]"><OfficeTile letter="V" color="#3355a8" /></button>

      <div className="ml-auto flex items-center pr-5">
        <button aria-label="Show hidden icons"><svg width="8" height="5" className="mr-[13px]" aria-hidden="true"><path d="M0 5h8L4 0z" fill="#fff" /></svg></button>
        <svg width="16" height="13" viewBox="0 0 16 13" aria-label="Network signal" role="img"><path d="M.500 10h2v2.500h-2zM3.500 8.500h2v4h-2zM6.500 6.500h2v6h-2zM9.500 4h2v8.500h-2zM12.500 1h2.500v11.500h-2.500z" fill="#fff" /></svg>
        <svg width="17" height="15" viewBox="0 0 17 15" className="ml-2" aria-label="Action center" role="img"><path d="M1 0h2v15H1zM3 1h6v2h7l-2 3 1 2H9V7H3z" fill="#fff" stroke="#222" strokeWidth=".5" /></svg>
        <svg width="16" height="16" viewBox="0 0 16 16" className="ml-2" aria-label="Power" role="img"><path d="M2 1v4M5 1v4M3.500 9v6" stroke="#fff" strokeWidth="1.300" /><path d="M.500 4.500h6v3l-1.500 2H2L.500 7.500z" fill="#fff" /><path d="M8.500 2.500h6v12h-6z" fill="none" stroke="#fff" strokeWidth="1.500" /><path d="M10 1h3M10.500 4.500h2v8h-2z" stroke="#fff" fill="#fff" /></svg>
        <svg width="15" height="14" viewBox="0 0 15 14" className="ml-2" aria-label="Volume" role="img"><path d="M1 4h3l4-4v14l-4-4H1z" fill="#fff" /><path d="M10 4.500q1.500 2.500 0 5M12 2.500q2.500 4.500 0 9" fill="none" stroke="#ddd" strokeWidth="1.200" /></svg>
        <time className="ml-[18px] pt-0.5 text-center text-[11px] leading-[17px]">10:24 AM<br />2/6/2014</time>
      </div>
    </div>
  );
}

export default function App() {
  return (
    <div className={`flex h-screen flex-col overflow-hidden ${UI}`}>
      <TitleBar />
      <Ribbon />
      <Workspace />
      <StatusBar />
      <Taskbar />
    </div>
  );
}
